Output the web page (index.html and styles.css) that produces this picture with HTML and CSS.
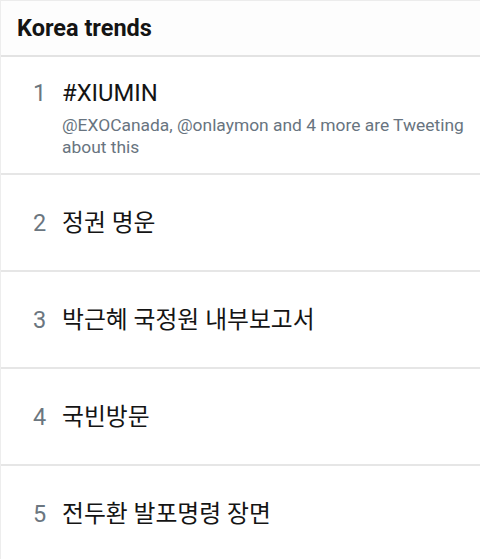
FILE: index.html
```html
<!DOCTYPE html>
<html lang="ko">
<head>
<meta charset="utf-8">
<link rel="stylesheet" href="styles.css">
</head>
<body>
<div class="card">
  <div class="header">Korea trends</div>
  <div class="row first">
    <div class="num">1</div>
    <div class="title">#XIUMIN</div>
    <div class="sub">@EXOCanada, @onlaymon and 4 more are Tweeting about this</div>
  </div>
  <div class="row">
    <div class="num">2</div>
    <div class="title">정권 명운</div>
  </div>
  <div class="row">
    <div class="num">3</div>
    <div class="title">박근혜 국정원 내부보고서</div>
  </div>
  <div class="row">
    <div class="num">4</div>
    <div class="title">국빈방문</div>
  </div>
  <div class="row">
    <div class="num">5</div>
    <div class="title">전두환 발포명령 장면</div>
  </div>
</div>
</body>
</html>
```
FILE: styles.css
```css
html, body {
  margin: 0;
  padding: 0;
  background: #ffffff;
}
body {
  font-family: Roboto, "Noto Sans CJK KR", sans-serif;
  width: 480px;
  height: 559px;
  overflow: hidden;
}
.card {
  border-top: 1px solid #ececec;
  border-left: 1px solid #ededed;
  display: flex;
  flex-direction: column;
}
.header {
  height: 56px;
  box-sizing: border-box;
  padding-left: 16px;
  display: flex;
  align-items: center;
  font-weight: 700;
  font-size: 23.5px;
  color: #141414;
  background: #fdfdfd;
  border-bottom: 2px solid #e3e3e3;
}
.row {
  display: grid;
  grid-template-columns: 61px 1fr;
  align-items: baseline;
  align-content: center;
  height: 97px;
  box-sizing: border-box;
  border-bottom: 2px solid #e6e6e6;
}
.row.first {
  height: 118px;
  align-content: start;
  padding-top: 19px;
}
.num {
  box-sizing: border-box;
  padding-left: 32px;
  font-size: 23.5px;
  line-height: 34px;
  color: #6b7680;
}
.title {
  font-size: 23.8px;
  line-height: 34px;
  color: #141414;
}
.sub {
  grid-column: 2;
  margin-top: 4px;
  font-size: 17.4px;
  line-height: 22px;
  color: #687480;
  padding-right: 8px;
}
```
